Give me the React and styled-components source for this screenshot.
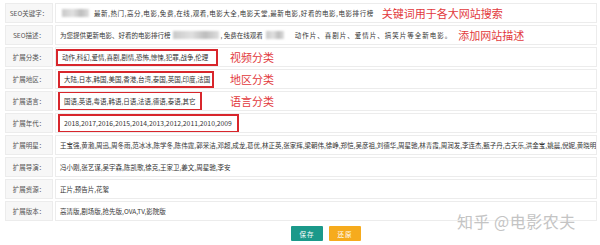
import React from "react";
import styled, { createGlobalStyle } from "styled-components";

const GlobalStyle = createGlobalStyle`
  html, body {
    margin: 0;
    padding: 0;
    background: #ffffff;
  }
  body {
    font-family: "Noto Sans CJK SC", "Noto Sans", sans-serif;
    color: #333;
  }
`;

const Page = styled.div`
  position: relative;
  width: 600px;
  height: 245px;
  box-sizing: border-box;
  padding: 3px 3px 0 5px;
  overflow: hidden;
`;

const Form = styled.div`
  display: grid;
  grid-template-columns: 48px 1fr;
  grid-auto-rows: 20px;
  column-gap: 2px;
  row-gap: 2px;
`;

const Label = styled.div`
  display: flex;
  align-items: center;
  justify-content: center;
  background: #f7f7f7;
  border: 1px solid #ececec;
  box-sizing: border-box;
  font-size: 6.5px;
  color: #555;
  white-space: nowrap;
`;

const Value = styled.div`
  display: flex;
  align-items: center;
  border: 1px solid #ececec;
  box-sizing: border-box;
  padding-left: ${(p) => (p.$flush ? "0" : "4px")};
  font-size: 6.5px;
  color: #333;
  white-space: nowrap;
  overflow: hidden;
`;

const Text = styled.span`
  margin-left: ${(p) => p.$ml || 0}px;
  letter-spacing: ${(p) => p.$ls || 0}px;
`;

const Blur = styled.span`
  display: inline-block;
  width: ${(p) => p.$w}px;
  height: 8px;
  margin: 0 ${(p) => p.$m || 2}px;
  background: linear-gradient(90deg, #c9c9c9, #e0e0e0 40%, #bdbdbd 70%, #dedede);
  filter: blur(1.2px);
`;

const Highlight = styled.span`
  display: inline-flex;
  align-items: center;
  height: ${(p) => p.$h || 17}px;
  box-sizing: border-box;
  width: ${(p) => p.$w}px;
  margin-left: ${(p) => p.$ml || 0}px;
  padding-left: 4px;
  border: 2px solid #d8262c;
  font-size: ${(p) => p.$fs || 6.5}px;
`;

const Note = styled.span`
  margin-left: ${(p) => p.$ml}px;
  font-size: 11px;
  color: #e23a3d;
  line-height: 1;
`;

const Actions = styled.div`
  grid-column: 2;
  display: flex;
  justify-content: center;
  align-items: flex-start;
  gap: 6px;
  padding-top: 3px;
`;

const Button = styled.button`
  width: 32px;
  height: 15px;
  padding: 0;
  border: none;
  border-radius: 1px;
  background: ${(p) => (p.$warn ? "#f6ab1d" : "#1b998a")};
  color: #fff;
  font-family: "Noto Sans CJK SC", sans-serif;
  font-size: 6.5px;
  letter-spacing: 1px;
`;

const Watermark = styled.div`
  position: absolute;
  left: 457px;
  top: 209px;
  font-size: 16px;
  color: #c4c4c4;
  letter-spacing: 0.5px;
  font-family: "Noto Sans CJK SC", sans-serif;
  white-space: nowrap;
`;

export default function App() {
  return (
    <Page>
      <GlobalStyle />
      <Form>
        <Label>SEO关键字：</Label>
        <Value>
          <Blur $w={27} $m={0} />
          <Text $ml={3} $ls={0.55}>
            最新,热门,高分,电影,免费,在线,观看,电影大全,电影天堂,最新电影,好看的电影,电影排行榜
          </Text>
          <Note $ml={8}>关键词用于各大网站搜索</Note>
        </Value>

        <Label>SEO描述：</Label>
        <Value>
          <Text>为您提供更新电影、好看的电影排行榜</Text>
          <Blur $w={46} $m={2} />
          <Text>, 免费在线观看</Text>
          <Blur $w={18} $m={3} />
          <Text $ml={8} $ls={1}>动作片、喜剧片、爱情片、搞笑片等全新电影。</Text>
          <Note $ml={6}>添加网站描述</Note>
        </Value>

        <Label>扩展分类：</Label>
        <Value $flush>
          <Highlight $w={162}>动作,科幻,爱情,喜剧,剧情,恐怖,惊悚,犯罪,战争,伦理</Highlight>
          <Note $ml={12}>视频分类</Note>
        </Value>

        <Label>扩展地区：</Label>
        <Value $flush>
          <Highlight $w={156} $ml={2}>大陆,日本,韩国,美国,香港,台湾,泰国,英国,印度,法国</Highlight>
          <Note $ml={16}>地区分类</Note>
        </Value>

        <Label>扩展语言：</Label>
        <Value $flush>
          <Highlight $w={144} $ml={2} $h={20}>国语,英语,粤语,韩语,日语,法语,德语,泰语,其它</Highlight>
          <Note $ml={28}>语言分类</Note>
        </Value>

        <Label>扩展年代：</Label>
        <Value $flush>
          <Highlight $w={181} $ml={2} $h={19} $fs={6.8}>
            2018,2017,2016,2015,2014,2013,2012,2011,2010,2009
          </Highlight>
        </Value>

        <Label>扩展明星：</Label>
        <Value>
          王宝强,黄渤,周迅,周冬雨,范冰冰,陈学冬,陈伟霆,郭采洁,邓超,成龙,葛优,林正英,张家辉,梁朝伟,徐峥,郑恺,吴彦祖,刘德华,周星驰,林青霞,周润发,李连杰,甄子丹,古天乐,洪金宝,姚晨,倪妮,黄晓明,彭于晏
        </Value>

        <Label>扩展导演：</Label>
        <Value>冯小刚,张艺谋,吴宇森,陈凯歌,徐克,王家卫,姜文,周星驰,李安</Value>

        <Label>扩展资源：</Label>
        <Value>正片,预告片,花絮</Value>

        <Label>扩展版本：</Label>
        <Value>高清版,剧场版,抢先版,OVA,TV,影院版</Value>

        <Actions>
          <Button>保存</Button>
          <Button $warn>还原</Button>
        </Actions>
      </Form>
      <Watermark>知乎 @电影农夫</Watermark>
    </Page>
  );
}
